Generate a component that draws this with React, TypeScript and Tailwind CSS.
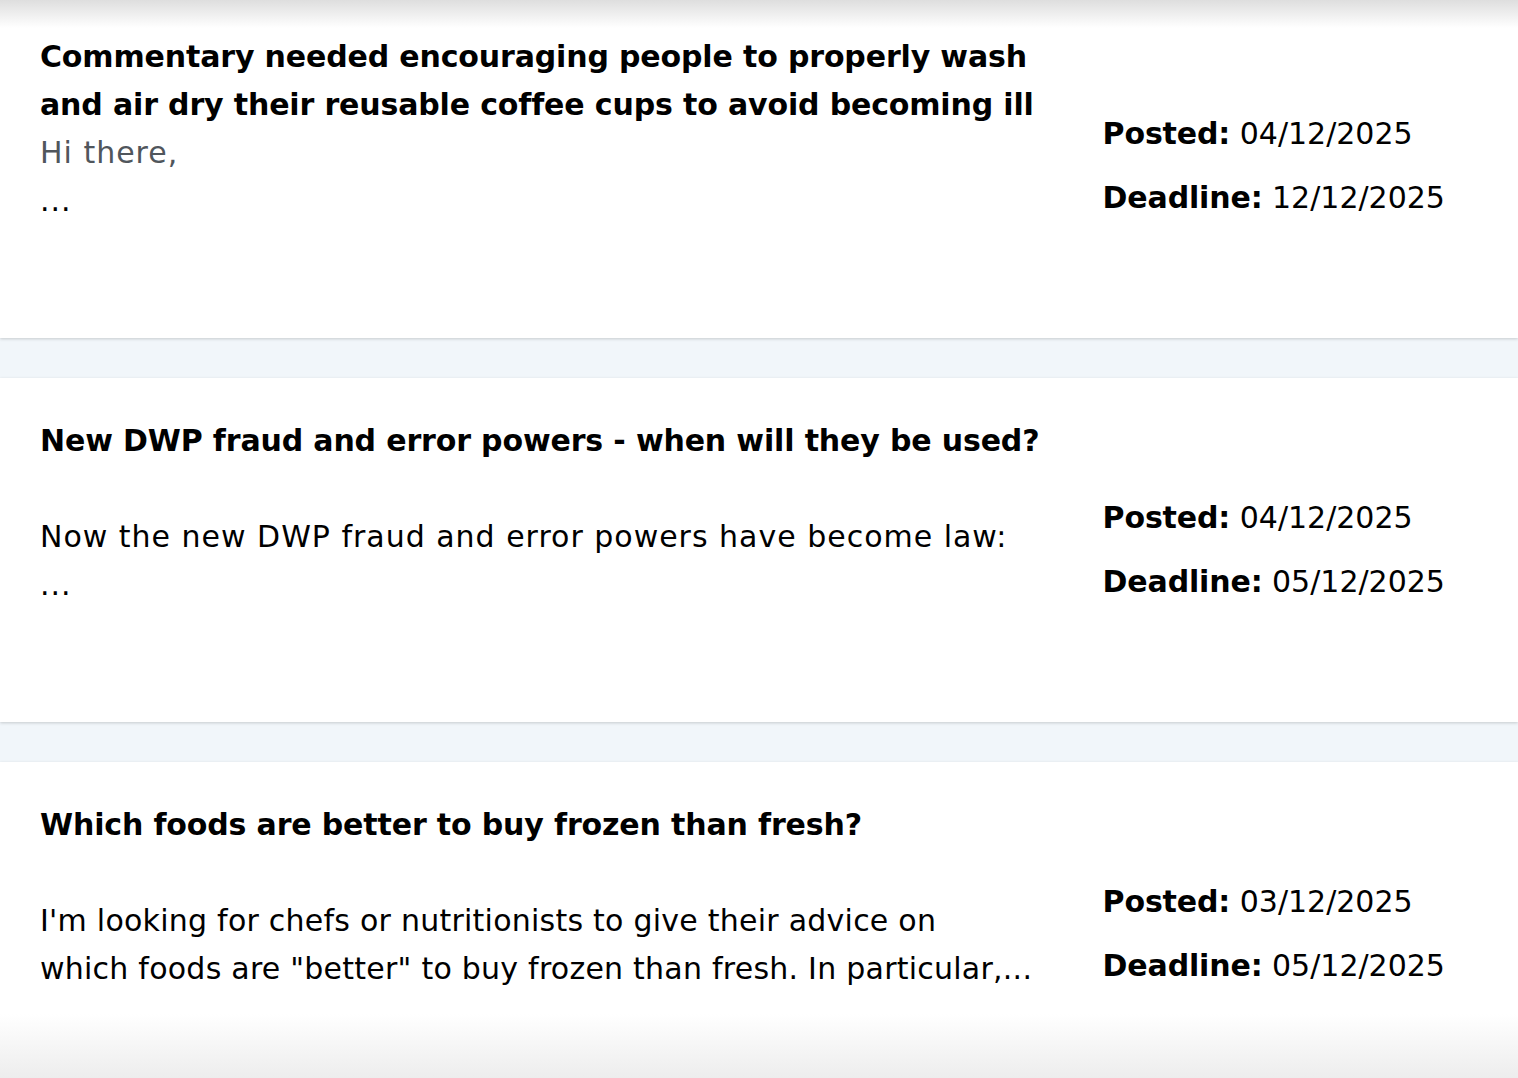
import React from 'react';

type Post = {
  title: string;
  body: React.ReactNode;
  posted: string;
  deadline: string;
  tight?: boolean;
};

const POSTS: Post[] = [
  {
    title: 'Commentary needed encouraging people to properly wash and air dry their reusable coffee cups to avoid becoming ill',
    body: (
      <>
        <span className="text-[#50565c]">Hi there,</span>
        {'\n...'}
      </>
    ),
    posted: '04/12/2025',
    deadline: '12/12/2025',
  },
  {
    title: 'New DWP fraud and error powers - when will they be used?',
    body: '\nNow the new DWP fraud and error powers have become law:\n...',
    posted: '04/12/2025',
    deadline: '05/12/2025',
  },
  {
    title: 'Which foods are better to buy frozen than fresh?',
    body: '\nI\'m looking for chefs or nutritionists to give their advice on\nwhich foods are "better" to buy frozen than fresh. In particular,...',
    posted: '03/12/2025',
    deadline: '05/12/2025',
    tight: true,
  },
];

const font = { fontFamily: '"DejaVu Sans", "Liberation Sans", sans-serif' };

function PostCard({ post }: { post: Post }) {
  return (
    <div className="flex h-[344px] bg-white shadow-[0_1px_3px_rgba(0,0,0,0.18)]">
      <div className="w-[70%] shrink-0 pl-10 pt-[39px]">
        <h3 className="text-[30px] font-bold leading-[48px] tracking-[-0.005em] text-black">{post.title}</h3>
        <p
          className={`whitespace-pre-line text-[30px] leading-[48px] text-black ${
            post.tight ? 'tracking-[0.008em]' : 'tracking-[0.033em]'
          }`}
        >
          {post.body}
        </p>
      </div>
      <div className="flex flex-1 flex-col justify-center gap-4 pl-10 text-[30px] leading-[48px] text-black">
        <div>
          <span className="font-bold tracking-[-0.005em]">Posted:</span> {post.posted}
        </div>
        <div>
          <span className="font-bold tracking-[-0.005em]">Deadline:</span> {post.deadline}
        </div>
      </div>
    </div>
  );
}

export default function App() {
  return (
    <div className="relative h-[1078px] overflow-hidden bg-[#f1f6fa]" style={font}>
      <div className="-mt-[6px] flex flex-col gap-10">
        {POSTS.map((p) => (
          <PostCard key={p.title} post={p} />
        ))}
      </div>
      {/* scroll shadows */}
      <div className="pointer-events-none absolute inset-x-0 top-0 h-7 bg-linear-to-b from-[#dedede] to-transparent" />
      <div className="pointer-events-none absolute inset-x-0 bottom-0 h-16 bg-linear-to-t from-[#ededed] to-transparent" />
    </div>
  );
}
